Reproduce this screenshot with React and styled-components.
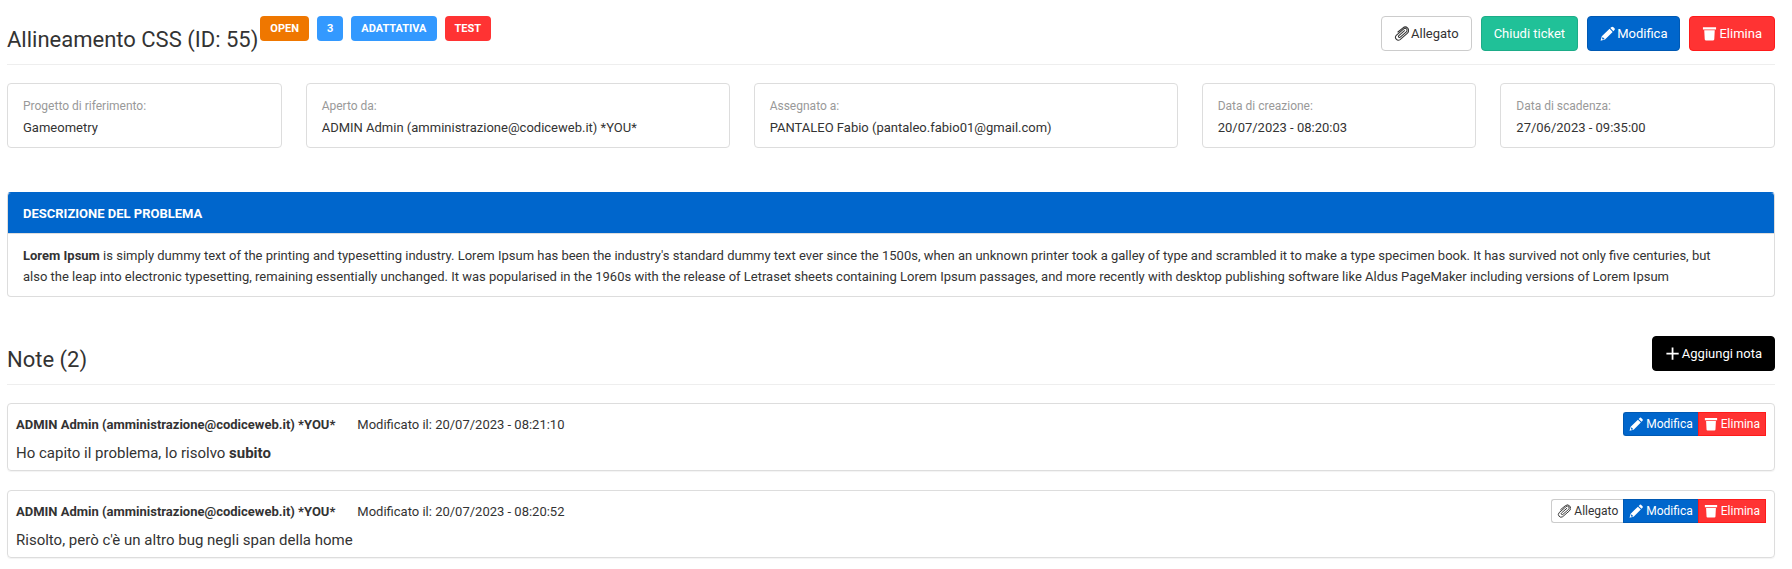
import React from 'react';
import styled, { createGlobalStyle, css } from 'styled-components';

const GlobalStyle = createGlobalStyle`
  *, *::before, *::after { box-sizing: border-box; }
  body {
    margin: 0;
    background: #fff;
    color: #333;
    font-family: Roboto, "Liberation Sans", sans-serif;
    font-size: 13px;
    line-height: 21px;
  }
`;

const Page = styled.main`
  padding: 16px 17px 11px 7px;
`;

const SectionHeader = styled.header`
  display: flex;
  align-items: flex-end;
  gap: 2px;
  padding-bottom: 13px;
  margin-bottom: 18px;
  border-bottom: 1px solid #eee;
`;

const Title = styled.h1`
  margin: 0;
  font-size: 22px;
  font-weight: 400;
  line-height: 22px;
`;

const Subtitle = styled(Title).attrs({ as: 'h2' })``;

const Badges = styled.div`
  display: flex;
  gap: 8px;
  align-self: flex-start;
`;

const badgeColors = { orange: '#ef7700', blue: '#3399ff', red: '#ff3333' };

const Badge = styled.span`
  padding: 0 10px;
  border-radius: 4px;
  background: ${({ $color }) => badgeColors[$color]};
  color: #fff;
  font-size: 11px;
  font-weight: 700;
  line-height: 25px;
`;

const Actions = styled.div`
  display: flex;
  gap: 9px;
  margin-left: auto;
`;

const variants = {
  plain: css`background: #fff; border-color: #ccc; color: #333;`,
  green: css`background: #20c198; border-color: #1dac88; color: #fff;`,
  blue: css`background: #0066cc; border-color: #0059b3; color: #fff;`,
  red: css`background: #ff3333; border-color: #ff1a1a; color: #fff;`,
  black: css`background: #000; border-color: #000; color: #fff;`,
};

const Button = styled.button`
  display: inline-flex;
  align-items: center;
  justify-content: center;
  gap: 2px;
  height: 35px;
  padding: 0 12px;
  border: 1px solid;
  border-radius: 4px;
  font: inherit;
  white-space: nowrap;
  cursor: pointer;
  ${({ $variant }) => variants[$variant]}
`;

const ButtonGroup = styled.div`
  display: flex;
  margin-left: auto;
`;

const SmallButton = styled(Button)`
  gap: 3px;
  height: 24px;
  padding: 0 5px;
  border-radius: 0;
  font-size: 12px;
  &:first-child { border-radius: 3px 0 0 3px; }
  &:not(:last-child) { border-right-width: 0; }
`;

const Icon = styled.svg.attrs({ viewBox: '0 0 16 16', 'aria-hidden': true })`
  flex: none;
  width: 15px;
  height: 15px;
  fill: currentColor;
  ${SmallButton} & { width: 14px; height: 14px; }
`;

const Facts = styled.dl`
  display: grid;
  grid-template-columns: repeat(12, 1fr);
  gap: 24px;
  margin: 0 0 44px;
`;

const Fact = styled.div`
  grid-column: span ${({ $span }) => $span};
  min-width: 0;
  padding: 12px 15px 9px;
  border: 1px solid #ddd;
  border-radius: 4px;
`;

const FactLabel = styled.dt`
  color: #999;
  font-size: 12px;
`;

const FactValue = styled.dd`
  margin: 0;
`;

const Panel = styled.section`
  margin-bottom: 39px;
  border: 1px solid #ddd;
  border-top-color: #0066cc;
  border-radius: 4px;
  overflow: hidden;
`;

const PanelTitle = styled.h2`
  margin: 0;
  padding: 10px 15px 9px;
  border-bottom: 1px solid #ddd;
  background: #0066cc;
  background-clip: padding-box;
  color: #fff;
  font-size: 13px;
  font-weight: 700;
  text-transform: uppercase;
`;

const PanelText = styled.p`
  margin: 0;
  padding: 11px 15px 9px;
`;

const NoteList = styled.div`
  display: grid;
  gap: 19px;
`;

const Note = styled.article`
  padding: 8px 8px 4px;
  border: 1px solid #ddd;
  border-radius: 4px;
  box-shadow: 0 1px 1px rgba(0, 0, 0, 0.05);
`;

const NoteHead = styled.header`
  display: flex;
  align-items: center;
  gap: 22px;
  margin-bottom: 4px;
`;

const NoteText = styled.p`
  margin: 0;
  font-size: 15px;
  line-height: 26px;
`;

const ClipIcon = () => (
  <Icon>
    <path
      d="M11.2 5 5.2 10.2a1.1 1.1 0 0 0 1.5 1.7l6.5-5.7a2.1 2.1 0 0 0-2.8-3.2L2.4 9.9a3.1 3.1 0 0 0 4.1 4.6l7.6-6.6a3.9 3.9 0 0 0 .5-5.6 3.7 3.7 0 0 0-5-.4L4.2 6.4"
      fill="none"
      stroke="currentColor"
      strokeWidth="1.1"
      strokeLinecap="round"
    />
  </Icon>
);

const PencilIcon = () => (
  <Icon>
    <path d="m11 2.2.9-.9a1.7 1.7 0 0 1 2.4 0l.9.9a1.7 1.7 0 0 1 0 2.4l-.9.9z" />
    <path
      fillRule="evenodd"
      d="m10.2 3 3.3 3.3-8.2 8.2-4.7 1.1L1.9 11zM2.8 11.7l-.6 2 .8.8 1.9-.6z"
    />
  </Icon>
);

const TrashIcon = () => (
  <Icon>
    <path d="M1 1.2h14v2.6H1zM2.4 4.6h11.2l-.5 9.6a1.2 1.2 0 0 1-1.2 1.2H4.1a1.2 1.2 0 0 1-1.2-1.2z" />
  </Icon>
);

const PlusIcon = () => (
  <Icon>
    <path d="M7.1 1.5h1.9v5.6h5.6V9H9v5.6H7.1V9H1.5V7.1h5.6z" />
  </Icon>
);

const facts = [
  { label: 'Progetto di riferimento:', value: 'Gameometry', span: 2 },
  { label: 'Aperto da:', value: 'ADMIN Admin (amministrazione@codiceweb.it) *YOU*', span: 3 },
  { label: 'Assegnato a:', value: 'PANTALEO Fabio (pantaleo.fabio01@gmail.com)', span: 3 },
  { label: 'Data di creazione:', value: '20/07/2023 - 08:20:03', span: 2 },
  { label: 'Data di scadenza:', value: '27/06/2023 - 09:35:00', span: 2 },
];

const notes = [
  {
    date: '20/07/2023 - 08:21:10',
    text: <>Ho capito il problema, lo risolvo <strong>subito</strong></>,
  },
  {
    date: '20/07/2023 - 08:20:52',
    text: "Risolto, però c'è un altro bug negli span della home",
    attachment: true,
  },
];

export default function App() {
  return (
    <>
      <GlobalStyle />
      <Page>
        <SectionHeader>
          <Title>Allineamento CSS (ID: 55)</Title>
          <Badges>
            <Badge $color="orange">OPEN</Badge>
            <Badge $color="blue">3</Badge>
            <Badge $color="blue">ADATTATIVA</Badge>
            <Badge $color="red">TEST</Badge>
          </Badges>
          <Actions>
            <Button type="button" $variant="plain"><ClipIcon />Allegato</Button>
            <Button type="button" $variant="green">Chiudi ticket</Button>
            <Button type="button" $variant="blue"><PencilIcon />Modifica</Button>
            <Button type="button" $variant="red"><TrashIcon />Elimina</Button>
          </Actions>
        </SectionHeader>

        <Facts>
          {facts.map(({ label, value, span }) => (
            <Fact key={label} $span={span}>
              <FactLabel>{label}</FactLabel>
              <FactValue>{value}</FactValue>
            </Fact>
          ))}
        </Facts>

        <Panel>
          <PanelTitle>Descrizione del problema</PanelTitle>
          <PanelText>
            <strong>Lorem Ipsum</strong> is simply dummy text of the printing and typesetting
            industry. Lorem Ipsum has been the industry's standard dummy text ever since the 1500s,
            when an unknown printer took a galley of type and scrambled it to make a type specimen
            book. It has survived not only five centuries, but
            <br />
            also the leap into electronic typesetting, remaining essentially unchanged. It was
            popularised in the 1960s with the release of Letraset sheets containing Lorem Ipsum
            passages, and more recently with desktop publishing software like Aldus PageMaker
            including versions of Lorem Ipsum
          </PanelText>
        </Panel>

        <SectionHeader>
          <Subtitle>Note (2)</Subtitle>
          <Actions>
            <Button type="button" $variant="black"><PlusIcon />Aggiungi nota</Button>
          </Actions>
        </SectionHeader>

        <NoteList>
          {notes.map(({ date, text, attachment }) => (
            <Note key={date}>
              <NoteHead>
                <strong>ADMIN Admin (amministrazione@codiceweb.it) *YOU*</strong>
                <span>Modificato il: {date}</span>
                <ButtonGroup>
                  {attachment && (
                    <SmallButton type="button" $variant="plain"><ClipIcon />Allegato</SmallButton>
                  )}
                  <SmallButton type="button" $variant="blue"><PencilIcon />Modifica</SmallButton>
                  <SmallButton type="button" $variant="red"><TrashIcon />Elimina</SmallButton>
                </ButtonGroup>
              </NoteHead>
              <NoteText>{text}</NoteText>
            </Note>
          ))}
        </NoteList>
      </Page>
    </>
  );
}
